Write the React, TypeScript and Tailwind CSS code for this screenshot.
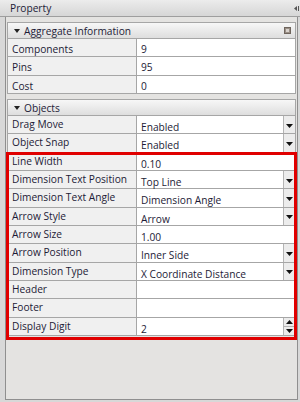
import React from "react";

type Row = {
  label: string;
  value: string;
  kind?: "text" | "select" | "spin";
};

const aggregateRows: Row[] = [
  { label: "Components", value: "9" },
  { label: "Pins", value: "95" },
  { label: "Cost", value: "0" },
];

const objectRows: Row[] = [
  { label: "Drag Move", value: "Enabled", kind: "select" },
  { label: "Object Snap", value: "Enabled", kind: "select" },
  { label: "Line Width", value: "0.10" },
  { label: "Dimension Text Position", value: "Top Line", kind: "select" },
  { label: "Dimension Text Angle", value: "Dimension Angle", kind: "select" },
  { label: "Arrow Style", value: "Arrow", kind: "select" },
  { label: "Arrow Size", value: "1.00" },
  { label: "Arrow Position", value: "Inner Side", kind: "select" },
  { label: "Dimension Type", value: "X Coordinate Distance", kind: "select" },
  { label: "Header", value: "" },
  { label: "Footer", value: "" },
  { label: "Display Digit", value: "2", kind: "spin" },
];

function Caret({ up = false }: { up?: boolean }) {
  return (
    <svg width="7" height="4" viewBox="0 0 7 4" className="block">
      {up ? <path d="M0 4 L3.5 0 L7 4 Z" fill="#111" /> : <path d="M0 0 L7 0 L3.5 4 Z" fill="#111" />}
    </svg>
  );
}

function SectionHeader({ title, pin }: { title: string; pin?: boolean }) {
  return (
    <div className="flex h-[17px] items-center border border-[#a6a6a6] bg-gradient-to-b from-[#f7f7f7] to-[#dedede] pl-[6px] pr-[3px]">
      <svg width="6" height="4" viewBox="0 0 6 4" className="mr-[4px] mt-[1px]">
        <path d="M0 0 L6 0 L3 4 Z" fill="#222" />
      </svg>
      <span className="flex-1 pt-[1px] text-[10.2px] leading-none">{title}</span>
      {pin && (
        <svg width="7" height="7" viewBox="0 0 7 7" className="mr-[1px]">
          <rect x="0.5" y="0.5" width="6" height="6" fill="#9a8f86" stroke="#6f655d" />
          <rect x="2" y="2" width="3" height="3" fill="#d8d2cc" />
        </svg>
      )}
    </div>
  );
}

function PropRow({ row, lift }: { row: Row; lift?: boolean }) {
  return (
    <div className="flex h-[18.33px] border-b border-[#a6a6a6] border-l border-r">
      <div
        className={`w-[129px] shrink-0 whitespace-nowrap border-r border-[#a6a6a6] bg-[#f0f0f0] pl-[4px] text-[10.2px] leading-[14px] ${
          lift ? "pt-[1px]" : "pt-[3px]"
        }`}
      >
        {row.label}
      </div>
      <div className="flex flex-1 bg-white">
        <div className={`flex-1 whitespace-nowrap pl-[4px] text-[10.2px] leading-[14px] ${lift ? "pt-[4px]" : "pt-[3px]"}`}>
          {row.value}
        </div>
        {row.kind === "select" && (
          <div className="flex w-[12px] items-center justify-center border-l border-[#b4b4b4] bg-[#ececec] pt-[2px]">
            <Caret />
          </div>
        )}
        {row.kind === "spin" && (
          <div className="flex w-[12px] flex-col border-l border-[#b4b4b4]">
            <div className="flex flex-1 items-center justify-center border-b border-[#b4b4b4] bg-[#ececec]">
              <Caret up />
            </div>
            <div className="flex flex-1 items-center justify-center bg-[#ececec]">
              <Caret />
            </div>
          </div>
        )}
      </div>
    </div>
  );
}

export default function App() {
  return (
    <div
      className="relative flex h-[402px] w-[300px] flex-col overflow-hidden bg-[#d8d8d8] text-[#1d1b36]"
      style={{ fontFamily: '"Open Sans", "Noto Sans", sans-serif' }}
    >
      {/* title bar */}
      <div className="flex h-[17px] shrink-0 items-center border-b border-[#9e9e9e] bg-gradient-to-b from-[#ececec] to-[#d6d6d6] pl-[10px]">
        <span className="flex-1 text-[10.2px] leading-none">Property</span>
        <svg width="8" height="7" viewBox="0 0 8 7" className="mr-[-2px]">
          <path d="M0 3.5 L3 1 L3 6 Z" fill="#555" />
          <rect x="4" y="1" width="1" height="5" fill="#555" />
          <rect x="6" y="1" width="2" height="5" fill="#555" />
        </svg>
      </div>

      <div className="flex flex-1 pl-[5px] pr-[2px] pb-[2px]">
        <div className="flex flex-1 flex-col border-l border-r border-b border-[#8f8f8f] bg-[#e4e3e1] pl-[1px] pr-[1px] pt-[5px]">
          <SectionHeader title="Aggregate Information" pin />
          {aggregateRows.map((r) => (
            <PropRow key={r.label} row={r} />
          ))}
          <div className="h-[5px]" />
          <SectionHeader title="Objects" />
          {objectRows.map((r) => (
            <PropRow key={r.label} row={r} lift />
          ))}
        </div>
      </div>

      {/* highlight annotation */}
      <div className="pointer-events-none absolute left-[6px] top-[152px] h-[188px] w-[291px] border-[3px] border-[#e00000]" />
    </div>
  );
}
